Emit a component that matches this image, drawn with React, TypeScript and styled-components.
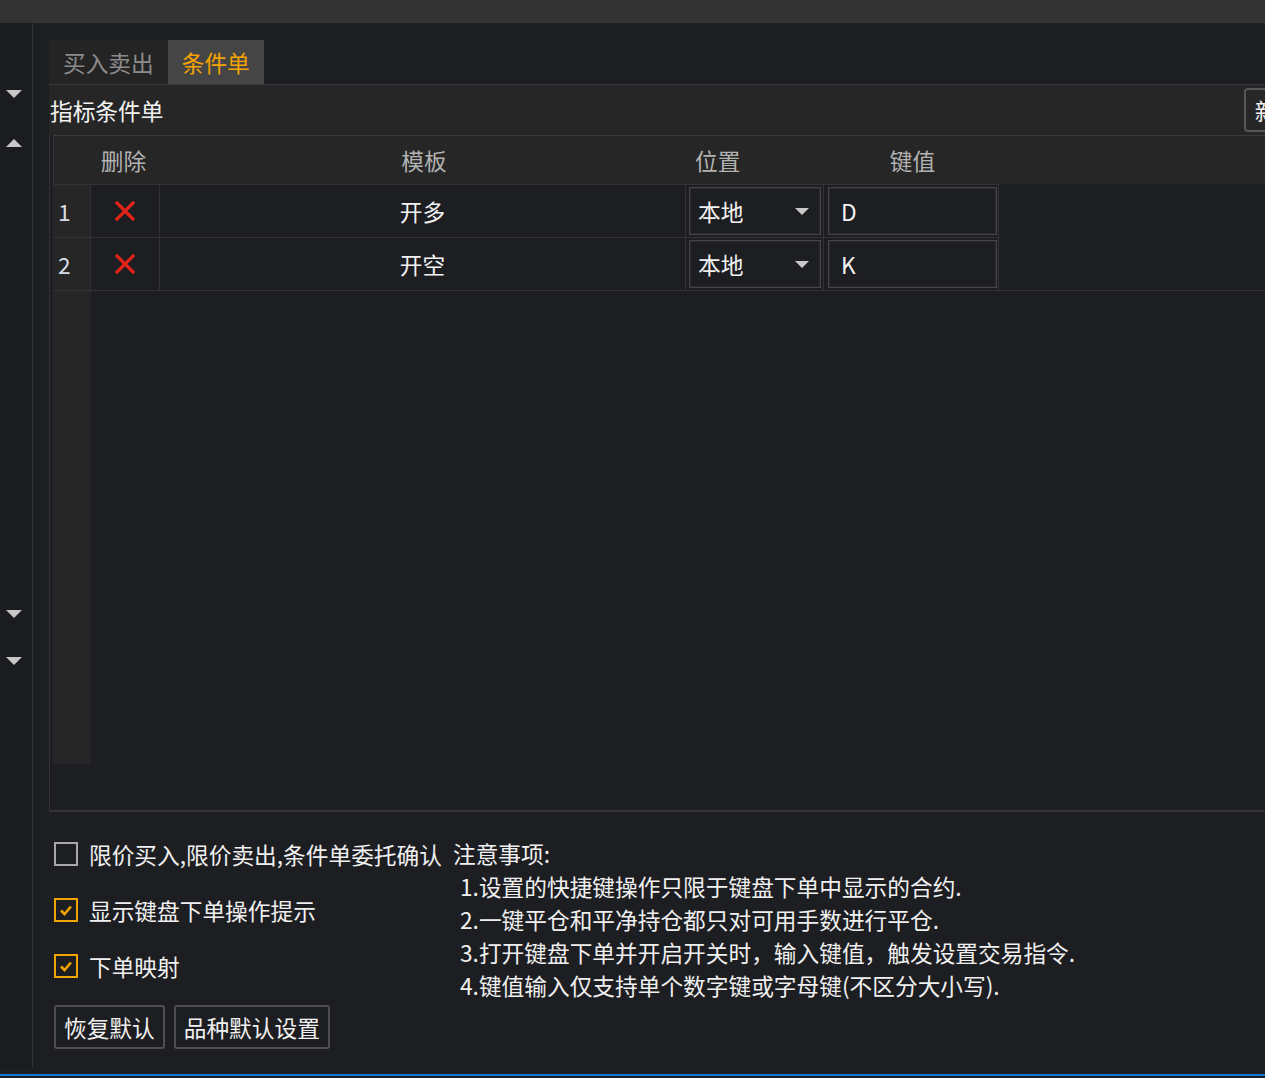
import styled, { createGlobalStyle } from 'styled-components'

type RowType = {
  id: number
  template: string
  place: string
  key: string
}

const rows: RowType[] = [
  { id: 1, template: '开多', place: '本地', key: 'D' },
  { id: 2, template: '开空', place: '本地', key: 'K' },
]

const notes = [
  '1.设置的快捷键操作只限于键盘下单中显示的合约.',
  '2.一键平仓和平净持仓都只对可用手数进行平仓.',
  '3.打开键盘下单并开启开关时，输入键值，触发设置交易指令.',
  '4.键值输入仅支持单个数字键或字母键(不区分大小写).',
]

const options = [
  { label: '限价买入,限价卖出,条件单委托确认', checked: false },
  { label: '显示键盘下单操作提示', checked: true },
  { label: '下单映射', checked: true },
]

const sideArrows = [
  { dir: 'down', top: 67 },
  { dir: 'up', top: 41 },
  { dir: 'down', top: 463 },
  { dir: 'down', top: 39 },
]

const fontSize = '22.7px'

const RedCross = () => (
  <svg width='20' height='20' viewBox='0 0 20 20'>
    <path d='M2 2 L18 18 M18 2 L2 18' stroke='#e2231a' strokeWidth='3.2' strokeLinecap='square' />
  </svg>
)

const CheckMark = () => (
  <svg width='16' height='16' viewBox='0 0 16 16'>
    <path d='M3 8.5 L6.5 12 L13 4.5' stroke='#f2a400' strokeWidth='2.6' fill='none' />
  </svg>
)

const App = () => {
  return (
    <Page>
      <GlobalStyle />
      <TopBar />
      <Main>
        <Sidebar>
          {sideArrows.map((a, i) => (
            <SideArrow key={i} dir={a.dir} top={a.top} />
          ))}
        </Sidebar>
        <Content>
          <Tabs>
            <Tab>买入卖出</Tab>
            <Tab active>条件单</Tab>
          </Tabs>
          <HeaderBar>
            <Title>指标条件单</Title>
            <NewButton>新建</NewButton>
          </HeaderBar>
          <TableFrame>
            <HeadRow>
              <HeadCell />
              <HeadCell shift={-6}>删除</HeadCell>
              <HeadCell>模板</HeadCell>
              <HeadCell align='left'>位置</HeadCell>
              <HeadCell>键值</HeadCell>
            </HeadRow>
            {rows.map((r) => (
              <Row key={r.id}>
                <IndexCell>{r.id}</IndexCell>
                <Cell>
                  <RedCross />
                </Cell>
                <Cell>{r.template}</Cell>
                <Cell>
                  <SelectBox>
                    {r.place}
                    <SelectArrow />
                  </SelectBox>
                </Cell>
                <Cell>
                  <KeyInput>{r.key}</KeyInput>
                </Cell>
              </Row>
            ))}
            <Filler>
              <Gutter />
            </Filler>
          </TableFrame>
          <Bottom>
            <OptionsColumn>
              {options.map((o) => (
                <OptionRow key={o.label}>
                  <CheckBox checked={o.checked}>{o.checked && <CheckMark />}</CheckBox>
                  {o.label}
                </OptionRow>
              ))}
              <ButtonRow>
                <PlainButton>恢复默认</PlainButton>
                <PlainButton>品种默认设置</PlainButton>
              </ButtonRow>
            </OptionsColumn>
            <Notes>
              <NotesTitle>注意事项:</NotesTitle>
              {notes.map((n) => (
                <NoteLine key={n}>{n}</NoteLine>
              ))}
            </Notes>
          </Bottom>
        </Content>
      </Main>
      <BlueLine />
    </Page>
  )
}

export default App

const GlobalStyle = createGlobalStyle`
  html, body {
    margin: 0;
    padding: 0;
    background: #1d1e22;
  }
  body {
    font-family: 'Noto Sans CJK SC', 'Noto Sans', sans-serif;
    color: #f0f0f0;
  }
`
const Page = styled.div`
  height: 1078px;
  display: flex;
  flex-direction: column;
  overflow: hidden;
  background: #1d1e22;
`
const TopBar = styled.div`
  height: 23px;
  background: #333333;
  flex-shrink: 0;
`
const Main = styled.div`
  flex: 1;
  display: flex;
  min-height: 0;
`
const Sidebar = styled.div`
  width: 32px;
  flex-shrink: 0;
  border-right: 1px solid #323336;
  background: #1b1c1f;
  display: flex;
  flex-direction: column;
  margin-bottom: 6px;
`
const SideArrow = styled.div<{ dir: string; top: number }>`
  width: 0;
  height: 0;
  margin-left: 6px;
  margin-top: ${(p) => p.top}px;
  border-left: 8px solid transparent;
  border-right: 8px solid transparent;
  ${(p) => (p.dir === 'down' ? 'border-top: 8px solid #c8c8c8;' : 'border-bottom: 8px solid #c8c8c8;')}
`
const Content = styled.div`
  flex: 1;
  min-width: 0;
  padding: 17px 0 0 16px;
  display: flex;
  flex-direction: column;
`
const Tabs = styled.div`
  display: flex;
  height: 44px;
`
const Tab = styled.div<{ active?: boolean }>`
  padding: 0 14px;
  display: flex;
  align-items: center;
  font-size: ${fontSize};
  background: ${(p) => (p.active ? '#454545' : '#242424')};
  color: ${(p) => (p.active ? '#f5a300' : '#8c8c8c')};
`
const HeaderBar = styled.div`
  height: 50px;
  border-top: 1px solid #3a3a3a;
  background: #262626;
  display: flex;
  align-items: center;
  justify-content: space-between;
  padding-left: 1px;
  overflow: hidden;
`
const Title = styled.div`
  font-size: ${fontSize};
  color: #f2f2f2;
`
const NewButton = styled.div`
  flex-shrink: 0;
  height: 40px;
  margin-right: -46px;
  padding: 0 9px;
  border: 2px solid #575757;
  border-radius: 4px;
  display: flex;
  align-items: center;
  font-size: ${fontSize};
  color: #f2f2f2;
`
const TableFrame = styled.div`
  height: 675px;
  border-left: 1px solid #333;
  border-bottom: 2px solid #333;
  padding-left: 3px;
  display: flex;
  flex-direction: column;
`
const columns = '38px 69px 526px 138px 175px'

const HeadRow = styled.div`
  display: grid;
  grid-template-columns: ${columns};
  height: 48px;
  border-top: 1px solid #3a3a3a;
  background: #262626;
  border-left: 1px solid #333;
`
const HeadCell = styled.div<{ align?: string; shift?: number }>`
  display: flex;
  align-items: center;
  justify-content: ${(p) => (p.align === 'left' ? 'flex-start' : 'center')};
  padding-left: ${(p) => (p.align === 'left' ? '8px' : '0')};
  margin-left: ${(p) => p.shift ?? 0}px;
  font-size: ${fontSize};
  color: #b2b2b2;
`
const Row = styled.div`
  display: grid;
  grid-template-columns: ${columns};
  height: 52px;
  width: 946px;
  border-top: 1px solid #333;
`
const Cell = styled.div`
  display: flex;
  align-items: center;
  justify-content: center;
  border-right: 1px solid #333;
  font-size: ${fontSize};
  color: #f2f2f2;
`
const IndexCell = styled.div`
  display: flex;
  align-items: center;
  padding-left: 5px;
  background: #262626;
  border-right: 1px solid #333;
  font-size: ${fontSize};
  color: #d8dde4;
`
const SelectBox = styled.div`
  flex: 1;
  align-self: stretch;
  margin: 2px 2px 2px 3px;
  border: 1px solid #454545;
  box-shadow: inset 0 0 0 1px #2a2a2a;
  display: flex;
  align-items: center;
  justify-content: space-between;
  padding: 0 11px 0 8px;
  font-size: ${fontSize};
  color: #f2f2f2;
`
const SelectArrow = styled.div`
  width: 0;
  height: 0;
  border-left: 7px solid transparent;
  border-right: 7px solid transparent;
  border-top: 7px solid #c8c8c8;
`
const KeyInput = styled.div`
  flex: 1;
  align-self: stretch;
  margin: 2px 1px 2px 4px;
  border: 1px solid #454545;
  box-shadow: inset 0 0 0 1px #2a2a2a;
  display: flex;
  align-items: center;
  padding-left: 12px;
  font-size: ${fontSize};
  color: #f2f2f2;
`
const Filler = styled.div`
  flex: 1;
  display: flex;
  flex-direction: column;
  border-top: 1px solid #333;
  padding-bottom: 46px;
`
const Gutter = styled.div`
  flex: 1;
  width: 38px;
  background: #262626;
`
const Bottom = styled.div`
  display: grid;
  grid-template-columns: 399px 1fr;
  padding: 14px 0 0 5px;
`
const OptionsColumn = styled.div`
  display: flex;
  flex-direction: column;
`
const OptionRow = styled.div`
  height: 56px;
  display: flex;
  align-items: center;
  gap: 11px;
  font-size: ${fontSize};
  color: #f0f0f0;
  white-space: nowrap;
`
const CheckBox = styled.div<{ checked: boolean }>`
  width: 20px;
  height: 20px;
  flex-shrink: 0;
  border: 2px solid ${(p) => (p.checked ? '#f2a400' : '#a8a8a8')};
  display: flex;
  align-items: center;
  justify-content: center;
`
const ButtonRow = styled.div`
  display: flex;
  gap: 9px;
  margin-top: 11px;
`
const PlainButton = styled.div`
  height: 40px;
  padding: 0 8px;
  border: 2px solid #4f4f4f;
  border-radius: 3px;
  display: flex;
  align-items: center;
  font-size: ${fontSize};
  color: #f0f0f0;
`
const Notes = styled.div`
  padding-top: 11px;
  display: flex;
  flex-direction: column;
  font-size: ${fontSize};
  color: #f0f0f0;
  line-height: 33px;
`
const NotesTitle = styled.div``
const NoteLine = styled.div`
  padding-left: 7px;
  white-space: nowrap;
`
const BlueLine = styled.div`
  height: 2px;
  background: #0a78d7;
  margin-bottom: 2px;
  flex-shrink: 0;
`
